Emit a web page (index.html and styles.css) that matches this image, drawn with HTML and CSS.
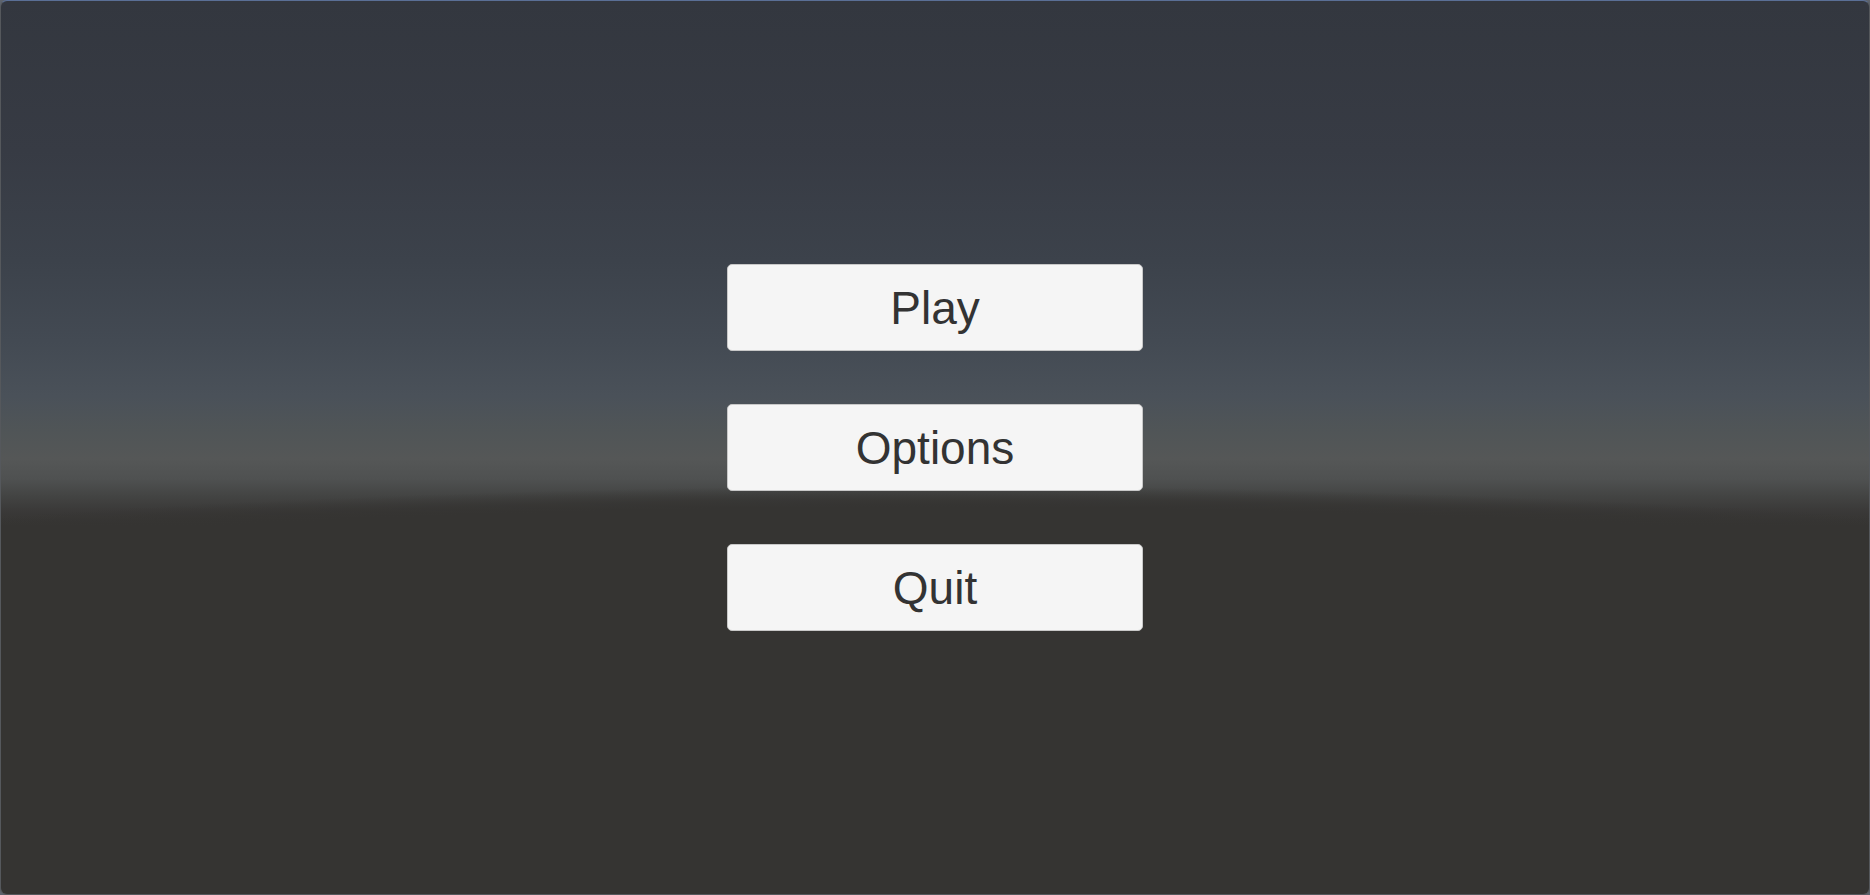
FILE: index.html
```html
<!DOCTYPE html>
<html lang="en">
<head>
<meta charset="utf-8">
<title>Main Menu</title>
<link rel="stylesheet" href="styles.css">
</head>
<body>
<main class="window">
  <nav class="menu">
    <button class="menu-btn">Play</button>
    <button class="menu-btn">Options</button>
    <button class="menu-btn">Quit</button>
  </nav>
</main>
</body>
</html>
```

FILE: styles.css
```css
html, body {
  margin: 0;
  padding: 0;
  width: 1870px;
  height: 895px;
  overflow: hidden;
  background: #5d636c;
}

.window {
  box-sizing: border-box;
  width: 1870px;
  height: 895px;
  border: 1px solid #55585c;
  border-top-color: #5a6f96;
  border-radius: 7px;
  display: flex;
  align-items: center;
  justify-content: center;
  background:
    radial-gradient(2000px 262px at 50% 747px,
      #353432 0%, #353432 92%, rgba(53,52,50,0.75) 95%, rgba(53,52,50,0) 100%),
    linear-gradient(to bottom,
      #33373f 0px,
      #373b44 150px,
      #3c424b 260px,
      #434a53 340px,
      #4a5159 395px,
      #505557 430px,
      #555757 458px,
      #4f5151 478px,
      #434443 495px,
      #3a3938 510px,
      #353432 525px,
      #353432 895px);
}

.menu {
  display: flex;
  flex-direction: column;
  gap: 53px;
}

.menu-btn {
  box-sizing: border-box;
  width: 416px;
  height: 87px;
  margin: 0;
  padding: 0;
  background: #f5f5f5;
  border: 1px solid #c8c8c8;
  border-radius: 5px;
  color: #333333;
  font-family: "Liberation Sans", Arial, sans-serif;
  font-size: 46px;
  line-height: 1;
  text-align: center;
  cursor: pointer;
}
```
